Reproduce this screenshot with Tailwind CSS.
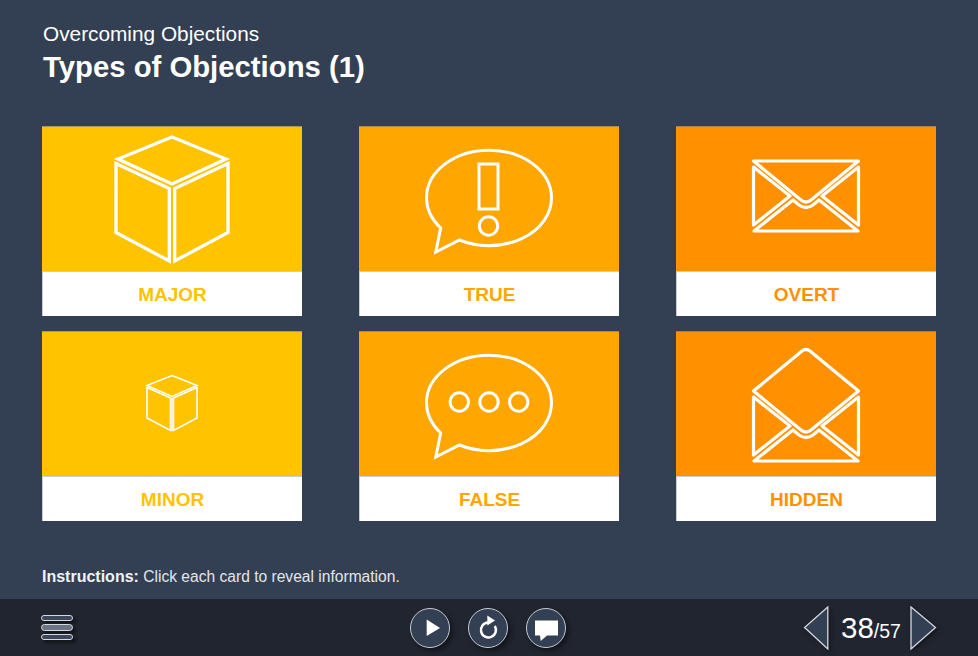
<!DOCTYPE html>
<html lang="en">
<head>
    <meta charset="UTF-8">
    <title>Types of Objections (1)</title>
    <script src="https://cdn.jsdelivr.net/npm/@tailwindcss/browser@4"></script>
</head>
<body class="w-[978px] h-[656px] overflow-hidden flex flex-col bg-[#333f53] font-['Liberation_Sans',Arial,sans-serif]">
    <main class="h-[599px] px-[42px] flex flex-col">
        <header class="pt-[22px] pl-px text-white">
            <p class="text-[20.8px] leading-[24px]">Overcoming Objections</p>
            <h1 class="mt-[4px] text-[29.3px] leading-[34px] font-bold">Types of Objections (1)</h1>
        </header>

        <div class="mt-[42px] grid grid-cols-[260px_260px_260px] gap-x-[57px] gap-y-[15px]">
            <!-- MAJOR -->
            <div>
                <div class="h-[145px] bg-[#ffc300] border-t border-[#a89a5c]">
                    <svg width="260" height="144" viewBox="0 1 260 144" fill="none" stroke="#fff" stroke-width="3.3" stroke-linejoin="miter">
                        <path d="M130 11 L184 33 L130 58 L76 33 Z"/>
                        <path d="M74 37.5 L127.3 62.5 V135 L74 106.5 Z"/>
                        <path d="M186 37.5 L132.7 62.5 V135 L186 106.5 Z"/>
                    </svg>
                </div>
                <div class="h-[45px] pt-[2px] bg-white border-t border-l border-[#c9ccd2] flex items-center justify-center text-[19px] leading-[24px] font-bold text-[#ffc300]">MAJOR</div>
            </div>
            <!-- TRUE -->
            <div>
                <div class="h-[145px] bg-[#ffa600] border-t border-[#a88a4c]">
                    <svg width="260" height="144" viewBox="0 1 260 144" fill="none" stroke="#fff" stroke-width="3">
                        <path d="M81.7 102 L76.8 126 L100.5 114 A62.5 47.6 0 0 0 192.5 71.8 A62.5 47.6 0 0 0 67.5 71.8 A62.5 47.6 0 0 0 81.7 102 Z"/>
                        <rect x="120" y="38" width="19" height="45"/>
                        <circle cx="129.5" cy="100" r="9.2"/>
                    </svg>
                </div>
                <div class="h-[45px] pt-[2px] bg-white border-t border-l border-[#c9ccd2] flex items-center justify-center text-[19px] leading-[24px] font-bold text-[#ffa600]">TRUE</div>
            </div>
            <!-- OVERT -->
            <div>
                <div class="h-[145px] bg-[#ff9100] border-t border-[#a87e4c]">
                    <svg width="260" height="144" viewBox="0 1 260 144" fill="none" stroke="#fff" stroke-width="3.2" stroke-linejoin="round">
                        <path d="M77.5 35 H182.5 L135 74 Q130 78 125 74 Z"/>
                        <path d="M77.5 41 L114 70 L77.5 99 Z"/>
                        <path d="M182.5 41 L146 70 L182.5 99 Z"/>
                        <path d="M78 105 L117 74 L123 79 Q130 84 137 79 L143 74 L182 105 Z"/>
                    </svg>
                </div>
                <div class="h-[45px] pt-[2px] bg-white border-t border-l border-[#c9ccd2] flex items-center justify-center text-[19px] leading-[24px] font-bold text-[#ff9100]">OVERT</div>
            </div>
            <!-- MINOR -->
            <div>
                <div class="h-[145px] bg-[#ffc300] border-t border-[#a89a5c]">
                    <svg width="260" height="144" viewBox="0 1 260 144" fill="none" stroke="#fff" stroke-width="1.6">
                        <path d="M130 44.5 L155 54.5 L130 65.5 L105 54.5 Z"/>
                        <path d="M105 56.5 L128.5 67 V99.5 L105 87 Z"/>
                        <path d="M155 56.5 L131.5 67 V99.5 L155 87 Z"/>
                        <path d="M130 67 V100" stroke="#fff1d6" stroke-width="3.4"/>
                    </svg>
                </div>
                <div class="h-[45px] pt-[2px] bg-white border-t border-l border-[#c9ccd2] flex items-center justify-center text-[19px] leading-[24px] font-bold text-[#ffc300]">MINOR</div>
            </div>
            <!-- FALSE -->
            <div>
                <div class="h-[145px] bg-[#ffa600] border-t border-[#a88a4c]">
                    <svg width="260" height="144" viewBox="0 1 260 144" fill="none" stroke="#fff" stroke-width="3">
                        <path d="M81.7 102 L76.8 126 L100.5 114 A62.5 47.6 0 0 0 192.5 71.8 A62.5 47.6 0 0 0 67.5 71.8 A62.5 47.6 0 0 0 81.7 102 Z"/>
                        <circle cx="100.3" cy="71" r="9.2"/>
                        <circle cx="130" cy="71" r="9.2"/>
                        <circle cx="159.7" cy="71" r="9.2"/>
                    </svg>
                </div>
                <div class="h-[45px] pt-[2px] bg-white border-t border-l border-[#c9ccd2] flex items-center justify-center text-[19px] leading-[24px] font-bold text-[#ffa600]">FALSE</div>
            </div>
            <!-- HIDDEN -->
            <div>
                <div class="h-[145px] bg-[#ff9100] border-t border-[#a87e4c]">
                    <svg width="260" height="144" viewBox="0 1 260 144" fill="none" stroke="#fff" stroke-width="3.2" stroke-linejoin="round">
                        <path d="M77.5 60 L126 20 Q130 17 134 20 L182.5 60 L135 99 Q130 103 125 99 Z"/>
                        <path d="M77.5 66 L114 95 L77.5 124 Z"/>
                        <path d="M182.5 66 L146 95 L182.5 124 Z"/>
                        <path d="M78 130 L117 99 L123 104 Q130 109 137 104 L143 99 L182 130 Z"/>
                    </svg>
                </div>
                <div class="h-[45px] pt-[2px] bg-white border-t border-l border-[#c9ccd2] flex items-center justify-center text-[19px] leading-[24px] font-bold text-[#ff9100]">HIDDEN</div>
            </div>
        </div>

        <p class="mt-[47px] text-[15.6px] leading-[17px] text-[#e3e5e9]"><b class="text-[16px] text-[#f1f2f4]">Instructions:</b> Click each card to reveal information.</p>
    </main>

    <!-- barra inferior -->
    <footer class="h-[57px] bg-[#21252f] flex items-center">
        <div class="w-[410px] pl-[41px] flex flex-col gap-[3px]">
            <span class="w-[32px] h-[6px] rounded-full bg-[#3c475b] border border-[#d5d8de] shadow-[3px_3px_3px_#14161c]"></span>
            <span class="w-[32px] h-[7px] rounded-full bg-[#6b7484] border border-[#d5d8de] shadow-[3px_3px_3px_#14161c]"></span>
            <span class="w-[32px] h-[6px] rounded-full bg-[#3c475b] border border-[#d5d8de] shadow-[3px_3px_3px_#14161c]"></span>
        </div>

        <div class="flex gap-[18px]">
            <button class="w-[40px] h-[40px] rounded-full bg-[#333f53] border border-[#c5c9d0] shadow-[3px_3px_4px_#14161c] relative">
                <svg class="absolute -left-px -top-px" width="40" height="40" fill="#fff"><path d="M16.7 11.5 L30 20 L16.7 28 Z"/></svg>
            </button>
            <button class="w-[40px] h-[40px] rounded-full bg-[#333f53] border border-[#c5c9d0] shadow-[3px_3px_4px_#14161c] relative">
                <svg class="absolute -left-px -top-px" width="40" height="40"><path d="M20 14.5 A7.5 7.5 0 1 0 26.8 18" fill="none" stroke="#fff" stroke-width="2.5"/><path d="M19.3 7.5 L27 12.5 L19.3 17.5 Z" fill="#fff"/></svg>
            </button>
            <button class="w-[40px] h-[40px] rounded-full bg-[#333f53] border border-[#c5c9d0] shadow-[3px_3px_4px_#14161c] relative">
                <svg class="absolute -left-px -top-px" width="40" height="40" fill="#fff"><path d="M9 12.5 H32 V27.5 H21 L14.7 33 L14 27.5 H9 Z"/></svg>
            </button>
        </div>

        <div class="ml-auto mr-[41px] flex items-center">
            <svg width="26" height="44" fill="#333f53" stroke="#d5d8de" stroke-width="1.3" class="drop-shadow-[2px_2px_2px_#14161c]"><path d="M24.8 1 L1.6 21.5 L24.8 43 Z"/></svg>
            <p class="ml-[12px] w-[61px] whitespace-nowrap text-white leading-none"><span class="text-[29.5px]">38</span><span class="text-[19.5px]">/57</span></p>
            <svg width="27" height="44" fill="#333f53" stroke="#d5d8de" stroke-width="1.3" class="ml-[8px] drop-shadow-[2px_2px_2px_#14161c]"><path d="M1 1 L25.5 21.5 L1 43 Z"/></svg>
        </div>
    </footer>
</body>
</html>
